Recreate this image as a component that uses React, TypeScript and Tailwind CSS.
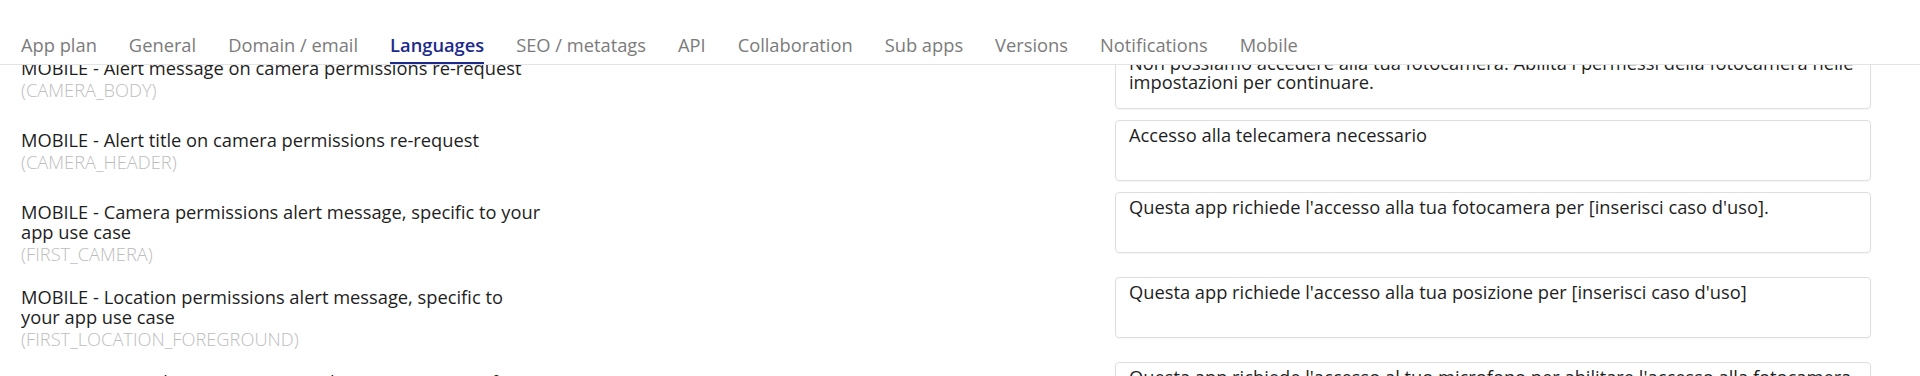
const tabs = [
  "App plan",
  "General",
  "Domain / email",
  "Languages",
  "SEO / metatags",
  "API",
  "Collaboration",
  "Sub apps",
  "Versions",
  "Notifications",
  "Mobile",
];

type Row = {
  title: string;
  keyName: string;
  value: string;
};

const rows: Row[] = [
  {
    title: "MOBILE - Alert message on camera permissions re-request",
    keyName: "CAMERA_BODY",
    value:
      "Non possiamo accedere alla tua fotocamera. Abilita i permessi della fotocamera nelle impostazioni per continuare.",
  },
  {
    title: "MOBILE - Alert title on camera permissions re-request",
    keyName: "CAMERA_HEADER",
    value: "Accesso alla telecamera necessario",
  },
  {
    title: "MOBILE - Camera permissions alert message, specific to your app use case",
    keyName: "FIRST_CAMERA",
    value: "Questa app richiede l'accesso alla tua fotocamera per [inserisci caso d'uso].",
  },
  {
    title: "MOBILE - Location permissions alert message, specific to your app use case",
    keyName: "FIRST_LOCATION_FOREGROUND",
    value: "Questa app richiede l'accesso alla tua posizione per [inserisci caso d'uso]",
  },
  {
    title: "MOBILE - Microphone permissions alert message, specific to your app use case",
    keyName: "FIRST_MICROPHONE",
    value:
      "Questa app richiede l'accesso al tuo microfono per abilitare l'accesso alla fotocamera per registrare video.",
  },
];

const TranslationRow = ({ title, keyName, value }: Row) => {
  return (
    <div className="flex items-start pb-[11px]">
      <div className="w-[1115px] shrink-0 pl-[21px] pt-[10px]">
        <p className="max-w-[523px] text-[18.3px] leading-[20px] text-[#1e1e1e]">{title}</p>
        <p className="text-[18.3px] leading-[24px] font-light text-[#bdbdbd]">({keyName})</p>
      </div>
      <div className="w-[756px] h-[61px] shrink-0 border border-[#dedede] rounded-[4px] shadow-[0_1px_2px_rgba(0,0,0,0.04)] pt-[4px] px-[13px] text-[18.3px] leading-[19px] text-[#1e1e1e] overflow-hidden">
        {value}
      </div>
    </div>
  );
};

export default function App() {
  return (
    <div className="h-[376px] w-[1920px] overflow-hidden bg-white font-['Open_Sans',sans-serif]">
      <div className="relative z-10 bg-white border-b border-[#e3e3e3] pt-[33px] pl-[21px]">
        <div className="flex gap-8">
          {tabs.map((t) => (
            <div
              key={t}
              className={
                t === "Languages"
                  ? "text-[18.3px] leading-[24px] pb-[5px] border-b-2 border-[#1c2a8c] text-[#1c2a8c] font-semibold"
                  : "text-[18.3px] leading-[24px] pb-[5px] border-b-2 border-transparent text-[#7b7b7b]"
              }
            >
              {t}
            </div>
          ))}
        </div>
      </div>
      <div className="-mt-[17px]">
        {rows.map((r) => (
          <TranslationRow key={r.keyName} {...r} />
        ))}
      </div>
    </div>
  );
}
